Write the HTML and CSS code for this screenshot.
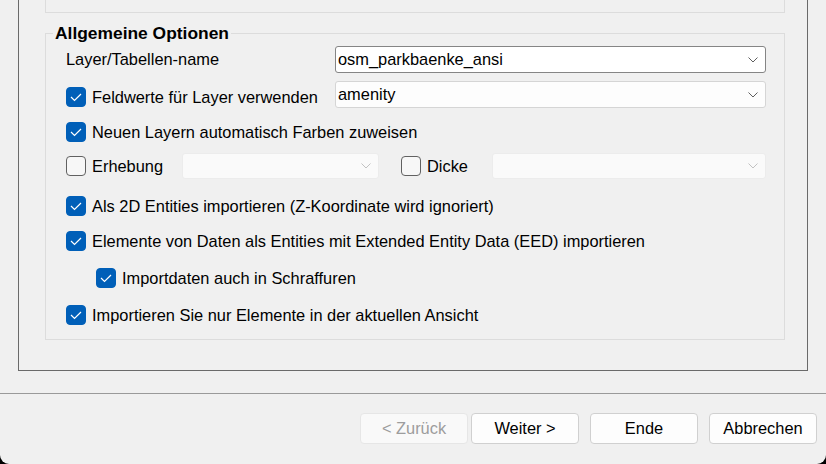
FILE: index.html
```html
<!DOCTYPE html>
<html lang="de">
<head>
    <meta charset="UTF-8">
    <meta name="viewport" content="width=device-width, initial-scale=1.0">
    <title>Import-Assistent</title>
    <link rel="stylesheet" href="styles.css">
</head>
<body>

<div class="window">
    <div class="frame">
        <!-- Rest der vorherigen Gruppe -->
        <div class="group-prev"></div>

        <fieldset class="group">
            <legend>Allgemeine Optionen</legend>

            <div class="options">
                <div class="row">
                    <span class="field-label">Layer/Tabellen-name</span>
                    <div class="combo combo-focus">
                        <span class="combo-text">osm_parkbaenke_ansi</span>
                        <svg class="chevron" width="10" height="6" viewBox="0 0 10 6"><polyline points="0.5,0.5 5,5 9.5,0.5"/></svg>
                    </div>
                </div>

                <div class="row row-tight">
                    <label class="check field-label check-low">
                        <span class="box on"><svg width="18" height="18" viewBox="0 0 18 18"><polyline points="4,9 7.5,12.5 14,6"/></svg></span>
                        Feldwerte für Layer verwenden
                    </label>
                    <div class="combo">
                        <span class="combo-text">amenity</span>
                        <svg class="chevron" width="10" height="6" viewBox="0 0 10 6"><polyline points="0.5,0.5 5,5 9.5,0.5"/></svg>
                    </div>
                </div>

                <div class="row row-m14">
                    <label class="check">
                        <span class="box on"><svg width="18" height="18" viewBox="0 0 18 18"><polyline points="4,9 7.5,12.5 14,6"/></svg></span>
                        Neuen Layern automatisch Farben zuweisen
                    </label>
                </div>

                <div class="row row-m11">
                    <label class="check check-erhebung">
                        <span class="box"></span>
                        Erhebung
                    </label>
                    <div class="combo combo-off combo-short">
                        <span class="combo-text"></span>
                        <svg class="chevron" width="10" height="6" viewBox="0 0 10 6"><polyline points="0.5,0.5 5,5 9.5,0.5"/></svg>
                    </div>
                    <label class="check check-dicke">
                        <span class="box"></span>
                        Dicke
                    </label>
                    <div class="combo combo-off">
                        <span class="combo-text"></span>
                        <svg class="chevron" width="10" height="6" viewBox="0 0 10 6"><polyline points="0.5,0.5 5,5 9.5,0.5"/></svg>
                    </div>
                </div>

                <div class="row row-m17">
                    <label class="check">
                        <span class="box on"><svg width="18" height="18" viewBox="0 0 18 18"><polyline points="4,9 7.5,12.5 14,6"/></svg></span>
                        Als 2D Entities importieren (Z-Koordinate wird ignoriert)
                    </label>
                </div>

                <div class="row row-m15">
                    <label class="check">
                        <span class="box on"><svg width="18" height="18" viewBox="0 0 18 18"><polyline points="4,9 7.5,12.5 14,6"/></svg></span>
                        Elemente von Daten als Entities mit Extended Entity Data (EED) importieren
                    </label>
                </div>

                <div class="row row-m17 row-indent">
                    <label class="check">
                        <span class="box on"><svg width="18" height="18" viewBox="0 0 18 18"><polyline points="4,9 7.5,12.5 14,6"/></svg></span>
                        Importdaten auch in Schraffuren
                    </label>
                </div>

                <div class="row row-m17">
                    <label class="check">
                        <span class="box on"><svg width="18" height="18" viewBox="0 0 18 18"><polyline points="4,9 7.5,12.5 14,6"/></svg></span>
                        Importieren Sie nur Elemente in der aktuellen Ansicht
                    </label>
                </div>
            </div>
        </fieldset>
    </div>

    <div class="separator"></div>

    <!-- Assistenten-Buttons -->
    <div class="buttons">
        <div class="btn-pair">
            <button class="btn" disabled>&lt; Zurück</button>
            <button class="btn">Weiter &gt;</button>
        </div>
        <button class="btn">Ende</button>
        <button class="btn">Abbrechen</button>
    </div>
</div>

</body>
</html>
```

FILE: styles.css
```css
body {
    margin: 0;
    background-color: #000;
    font-family: "Liberation Sans", Arial, sans-serif;
    font-size: 16.4px;
    color: #000;
}

.window {
    height: 464px;
    background-color: #f0f0f0;
    border-radius: 0 0 9px 9px;
    overflow: hidden;
    display: flex;
    flex-direction: column;
}

.frame {
    height: 370px;
    margin: 0 18px;
    padding: 0 22px 0 26px;
    border: 1px solid #6a6a6a;
    border-top: none;
}

.group-prev {
    height: 12px;
    border: 1px solid #dcdcdc;
    border-top: none;
}

.group {
    margin: 10px 0 0 0;
    padding: 0;
    border: 1px solid #dcdcdc;
    min-width: 0;
}

.group legend {
    margin-left: 7px;
    padding: 0 2px;
    font-size: 17.4px;
    font-weight: bold;
    line-height: 20px;
}

.options {
    padding: 3px 18px 14px 20px;
}

.row {
    display: flex;
    align-items: center;
}

.row-tight { margin-top: 8px; }
.row-m11 { margin-top: 11px; }
.row-m14 { margin-top: 14px; }
.row-m15 { margin-top: 15px; }
.row-m17 { margin-top: 17px; }

.row-indent {
    padding-left: 30px;
}

.field-label {
    width: 269px;
    flex-shrink: 0;
}

.check {
    display: flex;
    align-items: center;
    gap: 6px;
    height: 20px;
    white-space: nowrap;
}

.check-low {
    align-self: flex-end;
    margin-bottom: 1px;
}

.check-erhebung {
    width: 116px;
    flex-shrink: 0;
}

.check-dicke {
    width: 91px;
    flex-shrink: 0;
    margin-left: 22px;
}

.box {
    width: 18px;
    height: 18px;
    border: 1px solid #616161;
    border-radius: 4px;
    background-color: #f7f7f7;
    flex-shrink: 0;
}

.box svg {
    display: block;
}

.box polyline {
    fill: none;
    stroke: #fff;
    stroke-width: 1.2;
}

.box.on {
    background-color: #005fb8;
    border-color: #005fb8;
}

/* Kombinationsfelder */
.combo {
    flex: 1;
    height: 25px;
    display: flex;
    align-items: center;
    justify-content: space-between;
    padding: 0 7px 0 2px;
    background-color: #fdfdfd;
    border: 1px solid #d5d5d5;
    border-radius: 3px;
}

.combo-focus {
    background-color: #fff;
    border-color: #858585;
}

.combo-off {
    height: 24px;
    background-color: #fafafa;
    border-color: #ececec;
}

.combo-short {
    flex: none;
    width: 186px;
}

.chevron polyline {
    fill: none;
    stroke: #5f5f5f;
    stroke-width: 1;
}

.combo-off .chevron polyline {
    stroke: #c2c2c2;
}

.separator {
    margin-top: 22px;
    border-top: 1px solid #9a9a9a;
}

.buttons {
    display: flex;
    justify-content: flex-end;
    gap: 11px;
    padding: 19px 9px 0 0;
}

.btn-pair {
    display: flex;
    gap: 3px;
}

.btn {
    width: 108px;
    height: 31px;
    padding: 0 0 0 0;
    background-color: #fdfdfd;
    border: 1px solid #d0d0d0;
    border-radius: 4px;
    font-family: "Liberation Sans", Arial, sans-serif;
    font-size: 16.4px;
    color: #000;
}

.btn:disabled {
    background-color: #f9f9f9;
    border-color: #e6e6e6;
    color: #9d9d9d;
}
```
